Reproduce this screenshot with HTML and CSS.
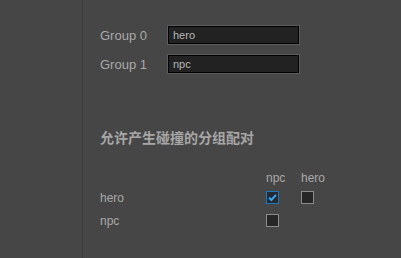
FILE: index.html
```html
<!DOCTYPE html>
<html>
<head>
    <title>Group Manager</title>
    <link rel="stylesheet" href="styles.css">
</head>
<body>
    <div class="layout">
        <div class="sidebar"></div>
        <div class="main">
            <h3 class="section-title cut">分组</h3>

            <div class="groups">
                <label class="group-row">
                    <span class="group-name">Group 0</span>
                    <input class="group-input" type="text" value="hero">
                </label>
                <label class="group-row">
                    <span class="group-name">Group 1</span>
                    <input class="group-input" type="text" value="npc">
                </label>
            </div>

            <h3 class="section-title">允许产生碰撞的分组配对</h3>

            <div class="matrix">
                <span></span>
                <span class="col-head">npc</span>
                <span class="col-head">hero</span>

                <span class="row-head">hero</span>
                <span class="cell"><span class="check checked"><svg viewBox="0 0 11 11" width="11" height="11"><path d="M2 5.6 L4.4 8 L9 2.8" fill="none" stroke="#33a6f4" stroke-width="2"/></svg></span></span>
                <span class="cell"><span class="check"></span></span>

                <span class="row-head">npc</span>
                <span class="cell"><span class="check"></span></span>
                <span></span>
            </div>
        </div>
    </div>
</body>
</html>
```

FILE: styles.css
```css
body {
    margin: 0;
    background: #464646;
    font-family: "Liberation Sans", Arial, "Noto Sans CJK SC", sans-serif;
    color: #a9a9a9;
}
.layout {
    display: flex;
    height: 258px;
    overflow: hidden;
}
.sidebar {
    width: 82px;
    border-right: 1px solid #3b3b3b;
    flex-shrink: 0;
}
.main {
    flex: 1;
    padding-left: 17px;
}
.section-title {
    margin: 0;
    font-size: 14px;
    font-weight: bold;
    line-height: 16px;
    font-family: "Noto Sans CJK SC", sans-serif;
    color: #a6a6a6;
}
.section-title.cut {
    margin-top: -16px;
}
.groups {
    display: flex;
    flex-direction: column;
    gap: 9px;
    margin-top: 25px;
}
.group-row {
    display: flex;
    align-items: center;
    height: 20px;
}
.group-name {
    width: 67px;
    font-size: 13px;
}
.group-input {
    box-sizing: border-box;
    width: 133px;
    height: 20px;
    margin: 0;
    padding: 0 5px;
    background: #222;
    border: 1px solid #5c5c5c;
    box-shadow: inset 0 0 0 1px #000;
    outline: none;
    color: #b8b8b8;
    font-family: "Liberation Sans", Arial, sans-serif;
    font-size: 11px;
}
.groups + .section-title {
    margin-top: 55px;
}
.matrix {
    display: grid;
    grid-template-columns: 166px 35px 35px;
    grid-template-rows: 18px 23px 23px;
    margin-top: 26px;
    font-size: 12px;
}
.col-head {
    line-height: 14px;
    color: #a9a9a9;
}
.row-head {
    line-height: 14px;
    padding-top: 2px;
}
.cell {
    padding-top: 2px;
}
.check {
    box-sizing: border-box;
    display: flex;
    align-items: center;
    justify-content: center;
    width: 13px;
    height: 13px;
    background: #262626;
    border: 1px solid #8c8c8c;
}
.check.checked {
    border-color: #1f78bd;
    background: #252a30;
}
```
